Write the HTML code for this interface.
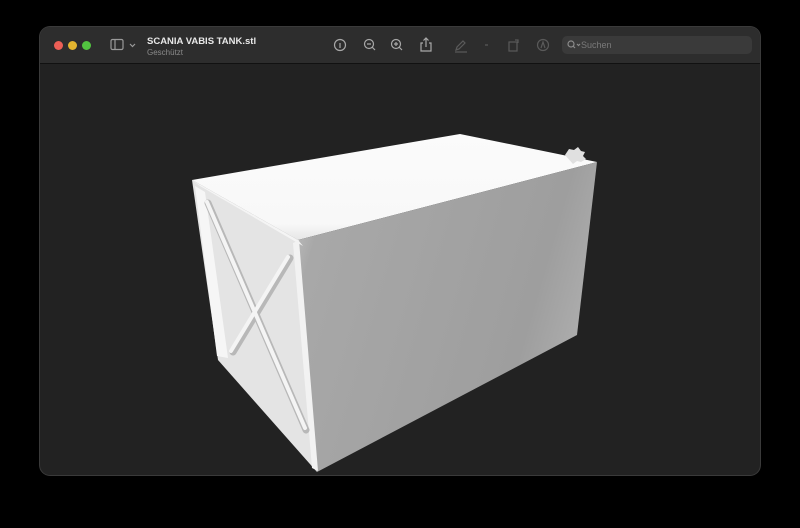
<!DOCTYPE html>
<html><head><meta charset="utf-8"><style>
html,body{margin:0;padding:0;width:800px;height:528px;background:#000;overflow:hidden;font-family:"Liberation Sans",sans-serif}
.win{position:absolute;left:40px;top:27px;width:720px;height:448px;background:#222;border-radius:10px;overflow:hidden;box-shadow:0 0 0 1px #3a3a3a}
.bar{position:absolute;left:0;top:0;width:720px;height:36px;background:#2d2d2d;border-bottom:1px solid #111}
.dot{position:absolute;top:14px;width:9px;height:9px;border-radius:50%}
.t1{position:absolute;left:107px;top:9px;color:#e8e8e8;font-size:9.5px;font-weight:bold}
.t2{position:absolute;left:107px;top:21px;color:#8a8a8a;font-size:8px}
.search{position:absolute;left:522px;top:9px;width:190px;height:18px;background:#3a3a3a;border-radius:5px;color:#7a7a7a;font-size:9px}
</style></head><body>
<div class="win">
<div class="bar">
<div class="dot" style="left:14px;background:#ec5f56"></div>
<div class="dot" style="left:28px;background:#e4b52f"></div>
<div class="dot" style="left:42px;background:#52c440"></div>
<svg style="position:absolute;left:70px;top:11px" width="30" height="14" fill="none" stroke="#9a9a9a" stroke-width="1.2"><rect x="1" y="1.5" width="12" height="10" rx="1.5"/><line x1="5" y1="1.5" x2="5" y2="11.5"/><path d="M20 6l2.5 2.5L25 6"/></svg>
<div class="t1">SCANIA VABIS TANK.stl</div>
<div class="t2">Geschützt</div>
<svg style="position:absolute;left:290px;top:9px" width="110" height="18" fill="none" stroke="#a8a8a8" stroke-width="1.2">
<circle cx="10" cy="9" r="5.5"/><line x1="10" y1="7" x2="10" y2="12"/>
<circle cx="39" cy="8" r="4.5"/><line x1="42" y1="11" x2="45" y2="14"/><line x1="37" y1="8" x2="41" y2="8"/>
<circle cx="66" cy="8" r="4.5"/><line x1="69" y1="11" x2="72" y2="14"/><line x1="64" y1="8" x2="68" y2="8"/><line x1="66" y1="6" x2="66" y2="10"/>
<path d="M93 7h-2v8h10V7h-2M96 11V2M93.5 4.5L96 2l2.5 2.5"/></svg>
<svg style="position:absolute;left:412px;top:9px" width="100" height="18" fill="none" stroke="#5a5a5a" stroke-width="1.2">
<path d="M4 14l1-3 6-6 2 2-6 6-3 1zM3 16h12"/><line x1="33" y1="9" x2="36" y2="9"/>
<rect x="57" y="6" width="8" height="9"/><path d="M63 4h3v3"/>
<circle cx="91" cy="9" r="5.5"/><path d="M89 12l2-6 2 6"/></svg>
<div class="search"><svg style="position:absolute;left:5px;top:4px" width="14" height="10" fill="none" stroke="#8a8a8a" stroke-width="1.2"><circle cx="4" cy="4" r="3"/><line x1="6" y1="6" x2="8" y2="8"/><path d="M10 4l1.5 1.5L13 4"/></svg><span style="position:absolute;left:19px;top:4px">Suchen</span></div>
</div>
<svg style="position:absolute;left:0;top:0" width="720" height="448" viewBox="40 27 720 448">
<defs>
<linearGradient id="rf" x1="0" y1="0" x2="1" y2="0.3"><stop offset="0" stop-color="#c8c8c8"/><stop offset="0.12" stop-color="#a8a8a8"/><stop offset="0.85" stop-color="#9e9e9e"/><stop offset="1" stop-color="#ababab"/></linearGradient>
<linearGradient id="tf" x1="0" y1="1" x2="0" y2="0"><stop offset="0" stop-color="#e6e6e6"/><stop offset="0.15" stop-color="#f8f8f8"/><stop offset="1" stop-color="#fbfbfb"/></linearGradient>
</defs>
<polygon points="192,180 460,134 597,162 298,240" fill="url(#tf)"/>
<polygon points="298,240 597,162 577,335 317,472" fill="url(#rf)"/>
<polygon points="192,180 298,240 317,472 218,360" fill="#e4e4e4"/>
<polygon points="192,180 298,240 303,246 200,186" fill="#f4f4f4"/>
<polygon points="293,243 299,240 318,471 312,468" fill="#f2f2f2"/>
<polygon points="195,186 205,192 228,358 217,356" fill="#f6f6f6"/>
<g stroke="#b8b8b8" stroke-width="7" stroke-linecap="round" fill="none">
<line x1="208" y1="203" x2="306" y2="430"/><line x1="290" y1="258" x2="233" y2="352"/></g>
<g stroke="#f4f4f4" stroke-width="4" stroke-linecap="round" fill="none">
<line x1="207" y1="202" x2="305" y2="428"/><line x1="288" y1="257" x2="231" y2="351"/></g>
<path d="M565 155l4-6 5 1 4-3 3 4 4 1-2 4 3 3-5 3-4-1-4 3z" fill="#e0e0e0"/>
</svg>
</div>
</body></html>
